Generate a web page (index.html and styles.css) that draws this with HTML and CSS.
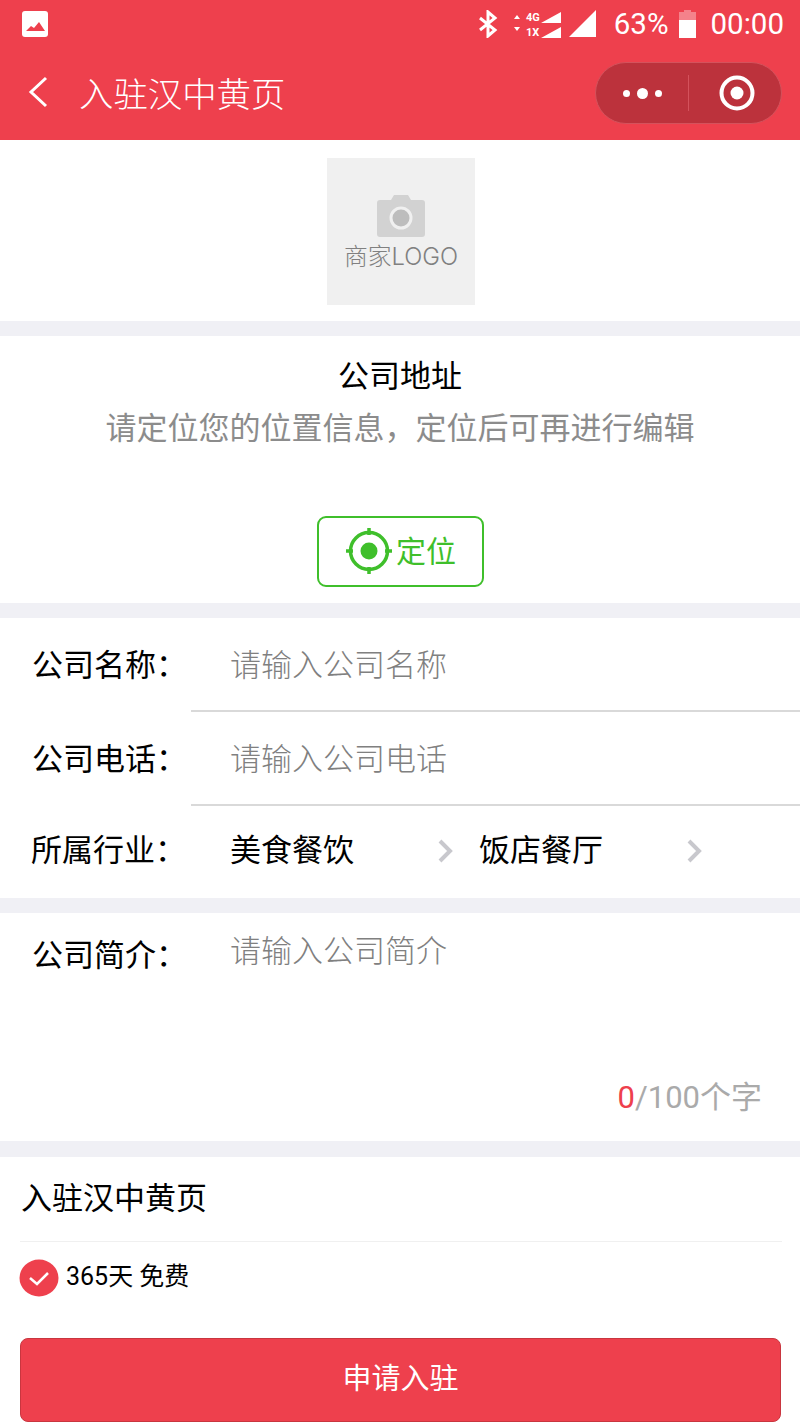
FILE: index.html
```html
<!DOCTYPE html>
<html lang="zh-CN">
<head>
    <meta charset="UTF-8">
    <title>入驻汉中黄页</title>
    <link rel="stylesheet" href="styles.css">
</head>
<body>
    <header class="topbar">
        <div class="status">
            <svg class="status-pic" width="26" height="26" viewBox="0 0 26 26">
                <rect width="26" height="26" rx="3" fill="#fff"/>
                <path d="M4 20l5-5 3 2 5-6 6 9z" fill="#ee404d"/>
            </svg>
            <div class="status-right">
                <svg width="20" height="28" viewBox="0 0 20 28" fill="none" stroke="#fff" stroke-width="3">
                    <path d="M2 8l15 12-7 6V2l7 6L2 20"/>
                </svg>
                <svg class="status-net" width="50" height="32" viewBox="0 -2 50 32">
                    <path d="M2 9l3-4 3 4zM2 17l3 4 3-4z" fill="#fff"/>
                    <text x="14" y="11" class="net-text">4G</text>
                    <text x="14" y="26" class="net-text">1X</text>
                    <path d="M29 13L49 2v11zM29 28l20-11v11z" fill="#fff"/>
                </svg>
                <svg class="status-signal" width="28" height="28" viewBox="0 0 28 28">
                    <path d="M0 27L27 0v27z" fill="#fff"/>
                </svg>
                <span class="status-text percent">63%</span>
                <svg class="status-battery" width="17" height="28" viewBox="0 0 17 28">
                    <path d="M5 0h7v2h5v8H0V2h5z" fill="#fff" opacity=".35"/>
                    <path d="M0 10h17v18H0z" fill="#fff"/>
                </svg>
                <span class="status-text">00:00</span>
            </div>
        </div>
        <div class="nav">
            <svg class="nav-back" width="20" height="32" viewBox="0 0 20 32" fill="none" stroke="#fff" stroke-width="3">
                <path d="M18 2L3 16l15 14"/>
            </svg>
            <span class="nav-title">入驻汉中黄页</span>
            <div class="capsule">
                <div class="capsule-part">
                    <i class="dot"></i><i class="dot big"></i><i class="dot"></i>
                </div>
                <div class="capsule-line"></div>
                <div class="capsule-part">
                    <svg width="36" height="36" viewBox="0 0 36 36">
                        <circle cx="18" cy="18" r="15.5" fill="none" stroke="#fff" stroke-width="4"/>
                        <circle cx="18" cy="18" r="6.5" fill="#fff"/>
                    </svg>
                </div>
            </div>
        </div>
    </header>

    <section class="logo-box">
        <div class="logo">
            <svg width="48" height="42" viewBox="0 0 48 42">
                <path d="M3 5h11l3-5h14l3 5h11a3 3 0 0 1 3 3v31a3 3 0 0 1-3 3H3a3 3 0 0 1-3-3V8a3 3 0 0 1 3-3z" fill="#d2d2d2"/>
                <circle cx="24" cy="23" r="10" fill="#bdbdbd" stroke="#f0f0f0" stroke-width="3"/>
            </svg>
            <span class="logo-text">商家LOGO</span>
        </div>
    </section>

    <section class="address">
        <h2 class="address-title">公司地址</h2>
        <p class="address-tip">请定位您的位置信息，定位后可再进行编辑</p>
        <button class="locate" type="button">
            <svg width="46" height="46" viewBox="0 0 46 46" fill="none" stroke="#3fbf2b">
                <circle cx="23" cy="23" r="18.5" stroke-width="3.5"/>
                <path d="M23 0v7M23 39v7M0 23h7M39 23h7" stroke-width="3.5"/>
                <circle cx="23" cy="23" r="8.5" fill="#3fbf2b" stroke="none"/>
            </svg>
            <span>定位</span>
        </button>
    </section>

    <section class="form">
        <div class="row">
            <span class="label">公司名称：</span>
            <div class="field line"><span class="hint">请输入公司名称</span></div>
        </div>
        <div class="row">
            <span class="label">公司电话：</span>
            <div class="field line"><span class="hint">请输入公司电话</span></div>
        </div>
        <div class="row short">
            <span class="label tight">所属行业：</span>
            <div class="field pick">
                <div class="pick-item">
                    <span>美食餐饮</span>
                    <svg width="16" height="24" viewBox="0 0 16 24" fill="none" stroke="#c8c8cd" stroke-width="4"><path d="M2 2l10 10L2 22"/></svg>
                </div>
                <div class="pick-item">
                    <span>饭店餐厅</span>
                    <svg width="16" height="24" viewBox="0 0 16 24" fill="none" stroke="#c8c8cd" stroke-width="4"><path d="M2 2l10 10L2 22"/></svg>
                </div>
            </div>
        </div>
    </section>

    <section class="intro">
        <div class="intro-main">
            <span class="label">公司简介：</span>
            <span class="hint">请输入公司简介</span>
        </div>
        <div class="count"><span class="count-num">0</span>/100个字</div>
    </section>

    <section class="apply">
        <h3 class="apply-title">入驻汉中黄页</h3>
        <div class="plan">
            <svg width="40" height="38" viewBox="0 0 40 38">
                <ellipse cx="20" cy="19" rx="19.5" ry="18.5" fill="#ee404d"/>
                <path d="M11 19l7 6 11-11" fill="none" stroke="#fff" stroke-width="2.5"/>
            </svg>
            <span>365天 免费</span>
        </div>
        <button class="submit" type="button">申请入驻</button>
    </section>
</body>
</html>
```

FILE: styles.css
```css
* {
    box-sizing: border-box;
}
html, body {
    height: 100%;
}
body {
    margin: 0;
    background-color: #f0f0f5;
    color: #000;
    font-family: "Noto Sans CJK SC", Roboto, sans-serif;
    overflow: hidden;
}
h2, h3, p {
    margin: 0;
    font-weight: 400;
}

/* top bar */
.topbar {
    height: 140px;
    background-color: #ee404d;
    color: #fff;
}
.status {
    height: 48px;
    padding: 10px 16px 0 22px;
    display: flex;
    justify-content: space-between;
}
.status-pic {
    margin-top: 1px;
}
.status-right {
    display: flex;
    align-items: center;
    height: 28px;
}
.status-net {
    margin-left: 14px;
}
.status-signal {
    margin-left: 7px;
}
.status-text {
    font-family: Roboto, sans-serif;
    font-size: 29.5px;
}
.percent {
    margin-left: 17px;
}
.status-battery {
    margin: 0 15px 0 10px;
}
.net-text {
    font-family: Roboto, sans-serif;
    font-size: 11px;
    font-weight: 700;
    fill: #fff;
}
.nav {
    height: 92px;
    padding: 0 18px 0 28px;
    display: flex;
    align-items: center;
}
.nav-back {
    margin-top: -4px;
}
.nav-title {
    margin-left: 31px;
    margin-bottom: 4px;
    font-size: 34.4px;
    font-weight: 300;
}
.capsule {
    margin-left: auto;
    margin-top: -2px;
    width: 187px;
    height: 62px;
    display: flex;
    align-items: center;
    background-color: #bc323c;
    border: 1px solid #d4525c;
    border-radius: 31px;
}
.capsule-part {
    flex: 1;
    display: flex;
    justify-content: center;
    align-items: center;
    gap: 7px;
}
.capsule-part svg {
    margin-left: 4px;
}
.capsule-line {
    width: 1px;
    height: 36px;
    background-color: #d4525c;
}
.dot {
    width: 7px;
    height: 7px;
    border-radius: 50%;
    background-color: #fff;
}
.big {
    width: 11px;
    height: 11px;
}

/* logo */
.logo-box {
    height: 181px;
    padding: 18px 0 0 2px;
    background-color: #fff;
}
.logo {
    width: 148px;
    height: 147px;
    margin: 0 auto;
    padding-top: 37px;
    display: flex;
    flex-direction: column;
    align-items: center;
    background-color: #f0f0f0;
}
.logo-text {
    margin-top: 1px;
    font-family: Inter, "Noto Sans CJK SC", sans-serif;
    font-size: 23.8px;
    line-height: 38px;
    font-weight: 300;
    color: #808080;
    white-space: nowrap;
}

/* address */
.address {
    height: 267px;
    margin-top: 15px;
    padding-top: 16px;
    text-align: center;
    background-color: #fff;
}
.address-title {
    font-size: 31px;
    line-height: 44px;
}
.address-tip {
    margin-top: 8px;
    font-size: 31px;
    line-height: 44px;
    color: #8c8c8c;
}
.locate {
    display: flex;
    align-items: center;
    justify-content: center;
    width: 167px;
    height: 71px;
    margin: 68px auto 0;
    padding: 0 0 0 2px;
    gap: 4px;
    color: #3fbf2b;
    font-family: inherit;
    font-size: 30px;
    background-color: #fff;
    border: 2px solid #3fbf2b;
    border-radius: 9px;
}
.locate svg {
    margin-bottom: 2px;
}
.locate span {
    margin-bottom: 6px;
}

/* form */
.form {
    margin-top: 15px;
    height: 280px;
    background-color: #fff;
}
.row {
    display: flex;
    height: 94px;
    align-items: stretch;
}
.short {
    height: 92px;
}
.label {
    width: 191px;
    padding-left: 32px;
    font-size: 31px;
    line-height: 90px;
    white-space: nowrap;
}
.tight {
    padding-left: 31px;
    line-height: 84px;
}
.field {
    flex: 1;
    padding-left: 39px;
    font-size: 31px;
}
.line {
    line-height: 90px;
    border-bottom: 2px solid #d9d9d9;
}
.hint {
    color: #808080;
    font-size: 31px;
    font-weight: 300;
}
.pick {
    display: flex;
}
.pick-item {
    width: 249px;
    display: flex;
    align-items: center;
    justify-content: space-between;
    padding-right: 25px;
}
.pick-item span {
    align-self: flex-start;
    line-height: 84px;
}
.pick-item svg {
    margin-top: -2px;
}

/* intro */
.intro {
    height: 228px;
    margin-top: 15px;
    background-color: #fff;
}
.intro-main {
    display: flex;
    height: 155px;
}
.intro-main .label {
    line-height: 80px;
}
.intro-main .hint {
    padding-left: 39px;
    line-height: 72px;
}
.count {
    padding-right: 38px;
    text-align: right;
    font-family: Roboto, "Noto Sans CJK SC", sans-serif;
    font-size: 31px;
    line-height: 60px;
    color: #aaa;
}
.count-num {
    color: #ee404d;
}

/* apply */
.apply {
    height: 265px;
    margin-top: 16px;
    padding: 0 18px 0 20px;
    background-color: #fff;
}
.apply-title {
    height: 85px;
    padding-left: 1px;
    font-size: 31px;
    line-height: 78px;
    border-bottom: 1px solid #f0f0f0;
}
.plan {
    display: flex;
    align-items: center;
    gap: 7px;
    height: 68px;
    margin-left: -1px;
    font-family: Roboto, "Noto Sans CJK SC", sans-serif;
    font-size: 25px;
}
.plan svg {
    margin-top: 4px;
}
.plan span {
    margin-bottom: 4px;
}
.submit {
    display: block;
    width: 761px;
    height: 84px;
    margin-top: 28px;
    padding: 0 0 8px;
    color: #fff;
    font-family: inherit;
    font-size: 29px;
    background-color: #ee404d;
    border: 1px solid #c9363f;
    border-radius: 8px;
}
```
